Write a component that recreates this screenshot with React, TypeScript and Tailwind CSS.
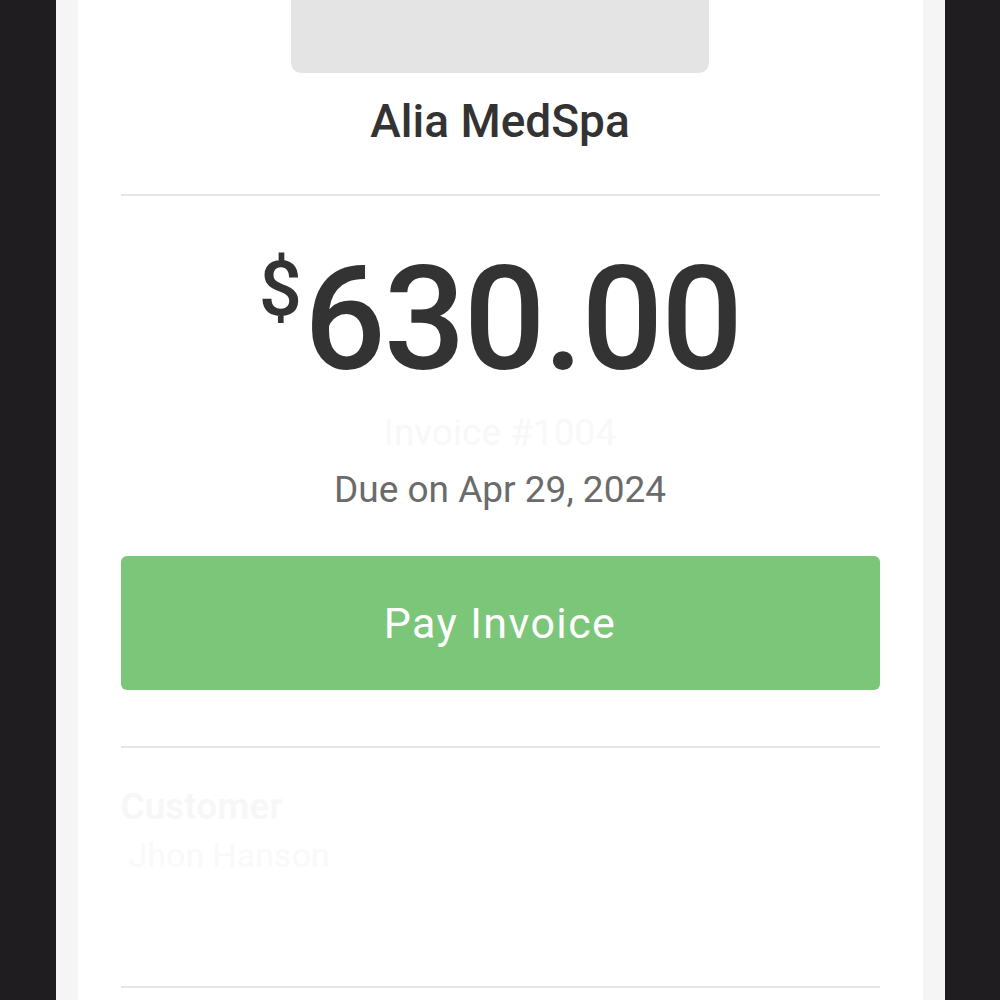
export default function App() {
  return (
    <main
      className="h-[1000px] w-[1000px] overflow-hidden bg-[#1f1d20] flex justify-center"
      style={{ fontFamily: "Roboto, 'Liberation Sans', sans-serif" }}
    >
      <div className="w-[889px] h-full bg-[#f5f5f5] px-[22px]">
        <div className="h-full bg-white px-[43px] flex flex-col items-center">
          {/* logo placeholder */}
          <div className="w-[418px] h-[73px] bg-[#e4e4e4] rounded-b-[10px]" />

          <h1 className="mt-[25px] text-[46px] leading-none font-medium text-[#333333]">
            Alia MedSpa
          </h1>

          <div className="mt-[50px] w-full h-[2px] bg-[#e6e6e6]" />

          <div className="mt-[52px] flex items-start text-[#333333]">
            <span className="mt-[3px] mr-[2px] text-[76px] leading-none font-medium">$</span>
            <span className="text-[144px] leading-none font-medium tracking-[-2px]">630.00</span>
          </div>

          <p className="mt-[22px] text-[37px] leading-none text-[#f8f8f8]">Invoice #1004</p>
          <p className="mt-[20px] text-[37px] leading-none text-[#6b6b6b]">Due on Apr 29, 2024</p>

          <button className="mt-[48px] w-full h-[134px] rounded-[6px] bg-[#7bc679] text-white text-[43px] leading-none tracking-[1.4px]">
            Pay Invoice
          </button>

          <div className="mt-[56px] w-full h-[2px] bg-[#e6e6e6]" />

          <div className="w-full mt-[40px] flex flex-col gap-[13px]">
            <p className="text-[37px] leading-none font-semibold text-[#f7f7f7]">Customer</p>
            <p className="pl-[8px] text-[34px] leading-none text-[#f9f9f9]">Jhon Hanson</p>
          </div>

          <div className="mt-[114px] w-full h-[2px] bg-[#e6e6e6]" />
        </div>
      </div>
    </main>
  );
}
